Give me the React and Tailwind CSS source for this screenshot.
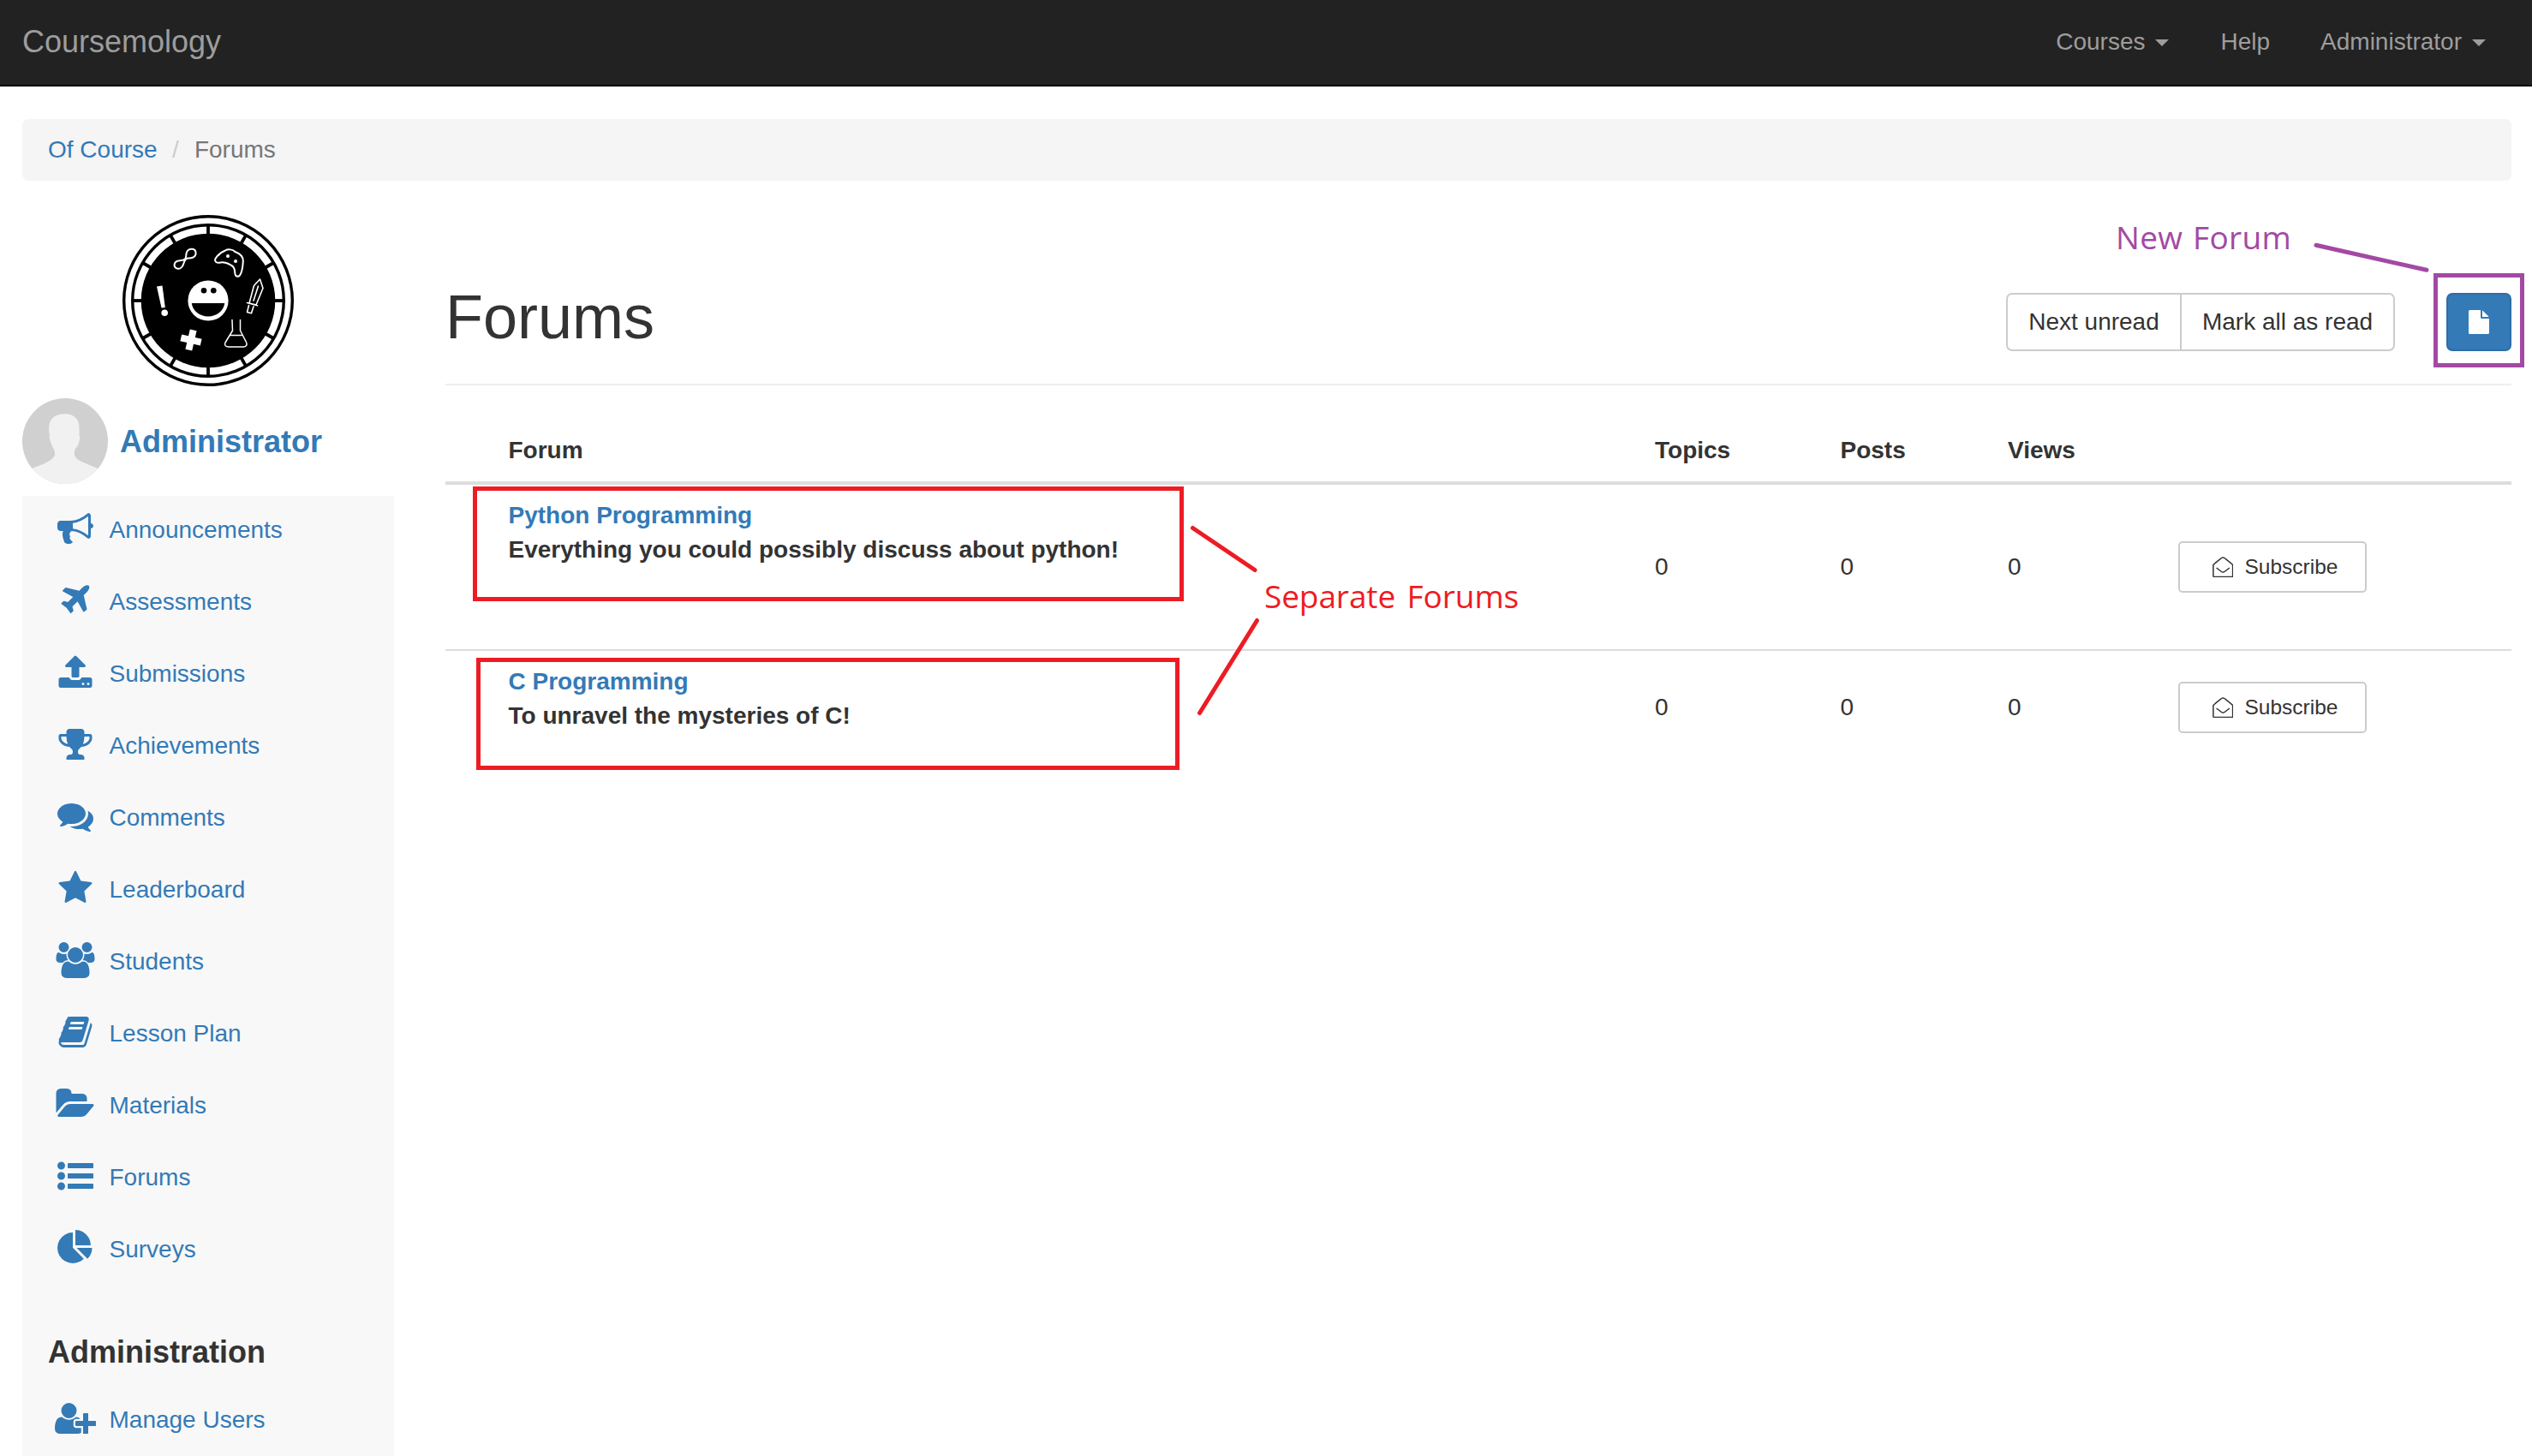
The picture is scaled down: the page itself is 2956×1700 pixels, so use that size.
const ICONS = {
  bullhorn: "M1664 640q53 0 90.5 37.5t37.5 90.5-37.5 90.5-90.5 37.5v384q0 52-38 90t-90 38q-417-347-812-380-58 19-91 66t-31 100.5 40 92.5q-20 33-23 65.5t6 58 33.5 55 48 50 61.5 50.5q-29 58-111.5 83t-168.5 11.5-132-55.5q-7-23-29.5-87.5t-32-94.5-23-89-15-101 3.5-98.5 22-110.5h-122q-66 0-113-47t-47-113v-192q0-66 47-113t113-47h480q435 0 896-384 52 0 90 38t38 90v384zm-128 604v-954q-394 302-768 343v270q377 42 768 341z",
  plane: "M1568 160q44 52 12 148t-108 172l-161 161 160 696q5 19-12 33l-128 96q-7 6-19 6-4 0-7-1-15-3-21-16l-279-508-259 259 53 194q5 17-8 31l-96 96q-9 9-23 9h-2q-15-2-24-13l-189-252-252-189q-11-7-13-23-1-13 9-25l96-97q9-9 23-9 6 0 8 1l194 53 259-259-508-279q-14-8-17-24-2-16 9-27l128-128q14-13 30-8l665 159 160-160q76-76 172-108t148 12z",
  upload: "M1344 1472q0-26-19-45t-45-19-45 19-19 45 19 45 45 19 45-19 19-45zm256 0q0-26-19-45t-45-19-45 19-19 45 19 45 45 19 45-19 19-45zm128-224v320q0 40-28 68t-68 28h-1472q-40 0-68-28t-28-68v-320q0-40 28-68t68-28h427q21 56 70.5 92t110.5 36h256q61 0 110.5-36t70.5-92h427q40 0 68 28t28 68zm-325-648q-17 40-59 40h-256v448q0 26-19 45t-45 19h-256q-26 0-45-19t-19-45v-448h-256q-42 0-59-40-17-39 14-69l448-448q18-19 45-19t45 19l448 448q31 30 14 69z",
  trophy: "M522 883q-74-162-74-371h-256v96q0 78 94.5 162t235.5 113zm1078-275v-96h-256q0 209-74 371 141-29 235.5-113t94.5-162zm128-128v128q0 71-41.5 143t-112 130-173 97.5-215.5 44.5q-42 54-95 95-38 34-52.5 72.5t-14.5 89.5q0 54 30.5 91t97.5 37q75 0 133.5 45.5t58.5 114.5v64q0 14-9 23t-23 9h-832q-14 0-23-9t-9-23v-64q0-69 58.5-114.5t133.5-45.5q67 0 97.5-37t30.5-91q0-51-14.5-89.5t-52.5-72.5q-53-41-95-95-113-5-215.5-44.5t-173-97.5-112-130-41.5-143v-128q0-40 28-68t68-28h288v-96q0-66 47-113t113-47h576q66 0 113 47t47 113v96h288q40 0 68 28t28 68z",
  comments: "M1408 768q0 139-94 257t-256.5 186.5-353.5 68.5q-86 0-176-16-124 88-278 128-36 9-86 16h-3q-11 0-20.5-8t-11.5-21q-1-3-1-6.5t.5-6.5 2-6l2.5-5t3.5-5.5 4-5 4.5-5 4-4.5q5-6 23-25t26-29.5 22.5-29 25-38.5 20.5-44q-124-72-195-177t-71-224q0-139 94-257t256.5-186.5 353.5-68.5 353.5 68.5 256.5 186.5 94 257zm384 256q0 120-71 224.5t-195 176.5q10 24 20.5 44t25 38.5 22.5 29 26 29.5 23 25q1 1 4 4.5t4.5 5 4 5 3.5 5.5l2.5 5t2 6 .5 6.5-1 6.5q-3 14-13 22t-22 7q-50-7-86-16-154-40-278-128-90 16-176 16-271 0-472-132 58 4 88 4 161 0 309-45t264-129q125-92 192-212t67-254q0-77-23-152 129 71 204 178t75 230z",
  star: "M1728 647q0 22-26 48l-363 354 86 500q1 7 1 20 0 21-10.5 35.5t-30.5 14.5q-19 0-40-12l-449-236-449 236q-22 12-40 12-21 0-31.5-14.5t-10.5-35.5q0-6 2-20l86-500-364-354q-25-27-25-48 0-37 56-46l502-73 225-455q19-41 49-41t49 41l225 455 502 73q56 9 56 46z",
  users: "M529 896q-162 5-265 128h-134q-82 0-138-40.5t-56-118.5q0-353 124-353 6 0 43.5 21t97.5 42.5 119 21.5q67 0 133-23-5 37-5 66 0 139 81 256zm1071 637q0 120-73 189.5t-194 69.5h-874q-121 0-194-69.5t-73-189.5q0-53 3.5-103.5t14-109 26.5-108.5 43-97.5 62-81 85.5-53.5 111.5-20q10 0 43 21.5t73 48 107 48 135 21.5 135-21.5 107-48 73-48 43-21.5q61 0 111.5 20t85.5 53.5 62 81 43 97.5 26.5 108.5 14 109 3.5 103.5zm-1024-1277q0 106-75 181t-181 75-181-75-75-181 75-181 181-75 181 75 75 181zm704 384q0 159-112.5 271.5t-271.5 112.5-271.5-112.5-112.5-271.5 112.5-271.5 271.5-112.5 271.5 112.5 112.5 271.5zm576 225q0 78-56 118.5t-138 40.5h-134q-103-123-265-128 81-117 81-256 0-29-5-66 66 23 133 23 59 0 119-21.5t97.5-42.5 43.5-21q124 0 124 353zm-128-609q0 106-75 181t-181 75-181-75-75-181 75-181 181-75 181 75 75 181z",
  book: "M1703 478q40 57 18 129l-275 906q-19 64-76.5 107.5t-122.5 43.5h-923q-77 0-148.5-53.5t-99.5-131.5q-24-67-2-127 0-4 3-27t4-37q1-8-3-21.5t-3-19.5q2-11 8-21t16.5-23.5 16.5-23.5q23-38 45-91.5t30-91.5q3-10 .5-30t-.5-28q3-11 17-28t17-23q21-36 42-92t25-90q1-9-2.5-32t.5-28q4-13 22-30.5t22-22.5q19-26 42.5-84.5t27.5-96.5q1-8-3-25.5t-2-26.5q2-8 9-18t18-23 17-21q8-12 16.5-30.5t15-35 16-36 19.5-32 26.5-23.5 36-11.5 47.5 5.5l-1 3q38-9 51-9h761q74 0 114 56t18 130l-274 906q-36 119-71.5 153.5t-128.5 34.5h-869q-27 0-38 15-11 16-1 43 24 70 144 70h923q29 0 56-15.5t35-41.5l300-987q7-22 5-57 38 15 59 43zm-1064 2q-4 13 2 22.5t20 9.5h608q13 0 25.5-9.5t16.5-22.5l21-64q4-13-2-22.5t-20-9.5h-608q-13 0-25.5 9.5t-16.5 22.5zm-83 256q-4 13 2 22.5t20 9.5h608q13 0 25.5-9.5t16.5-22.5l21-64q4-13-2-22.5t-20-9.5h-608q-13 0-25.5 9.5t-16.5 22.5z",
  folder: "M1815 952q0 31-31 66l-336 396q-43 51-120.5 86.5t-143.5 35.5h-1088q-34 0-60.5-13t-26.5-43q0-31 31-66l336-396q43-51 120.5-86.5t143.5-35.5h1088q34 0 60.5 13t26.5 43zm-343-344v160h-832q-94 0-197 47.5t-164 119.5l-337 396-5 6q0-4-.5-12.5t-.5-12.5v-960q0-92 66-158t158-66h320q92 0 158 66t66 158v32h544q92 0 158 66t66 158z",
  list: "M384 1408a192 192 0 1 1-384 0a192 192 0 1 1 384 0zM384 896a192 192 0 1 1-384 0a192 192 0 1 1 384 0zM384 384a192 192 0 1 1-384 0a192 192 0 1 1 384 0zM544 1280h1216q32 0 32 32v192q0 32-32 32h-1216q-32 0-32-32v-192q0-32 32-32zM544 768h1216q32 0 32 32v192q0 32-32 32h-1216q-32 0-32-32v-192q0-32 32-32zM544 256h1216q32 0 32 32v192q0 32-32 32h-1216q-32 0-32-32v-192q0-32 32-32z",
  pie: "M768 890l546 546q-106 108-247.5 168t-298.5 60q-209 0-385.5-103t-279.5-279.5-103-385.5 103-385.5 279.5-279.5 385.5-103v762zm187 6h773q0 157-60 298.5t-168 247.5zm709-128h-768v-768q209 0 385.5 103t279.5 279.5 103 385.5z",
  userPlus: "M704 896q-159 0-271.5-112.5t-112.5-271.5 112.5-271.5 271.5-112.5 271.5 112.5 112.5 271.5-112.5 271.5-271.5 112.5zm960 128h352q13 0 22.5 9.5t9.5 22.5v192q0 13-9.5 22.5t-22.5 9.5h-352v352q0 13-9.5 22.5t-22.5 9.5h-192q-13 0-22.5-9.5t-9.5-22.5v-352h-352q-13 0-22.5-9.5t-9.5-22.5v-192q0-13 9.5-22.5t22.5-9.5h352v-352q0-13 9.5-22.5t22.5-9.5h192q13 0 22.5 9.5t9.5 22.5v352zm-736 224q0 52 38 90t90 38h256v238q-68 50-171 50h-874q-121 0-194-69t-73-190q0-53 3.5-103.5t14-109 26.5-108.5 43-97.5 62-81 85.5-53.5 111.5-20q19 0 39 17 79 61 154.5 91.5t164.5 30.5 164.5-30.5 154.5-91.5q20-17 39-17 132 0 217 96h-223q-52 0-90 38t-38 90v192z",
};

const NAV = [
  ["bullhorn", "Announcements"],
  ["plane", "Assessments"],
  ["upload", "Submissions"],
  ["trophy", "Achievements"],
  ["comments", "Comments"],
  ["star", "Leaderboard"],
  ["users", "Students"],
  ["book", "Lesson Plan"],
  ["folder", "Materials"],
  ["list", "Forums"],
  ["pie", "Surveys"],
];

function NavItem({ icon, label }) {
  return (
    <a className="flex h-[84px] items-center pb-2 pl-[34px] text-[#337ab7]">
      <span className="flex w-[55px] justify-center">
        <svg
          viewBox={icon === "userPlus" ? "0 0 2048 1792" : "0 0 1792 1792"}
          className={icon === "userPlus" ? "h-[42px] w-[48px] overflow-visible" : "h-[42px] w-[42px] overflow-visible"}
          fill="currentColor"
        >
          <path d={ICONS[icon]} />
        </svg>
      </span>
      <span className="ml-[12.5px] pt-1 leading-10">{label}</span>
    </a>
  );
}

function Logo() {
  const ticks = Array.from({ length: 12 }, (_, i) => i * 30);
  return (
    <svg viewBox="0 0 200 200" className="size-[200px]">
      <circle cx="100" cy="100" r="98.3" fill="#fff" stroke="#000" strokeWidth="3.4" />
      <circle cx="100" cy="100" r="88.3" fill="#fff" stroke="#000" strokeWidth="3.4" />
      <circle cx="100" cy="100" r="78.3" fill="#000" />
      {ticks.map((t) => (
        <path key={t} d="M100 11v14" stroke="#000" strokeWidth="3.8" transform={`rotate(${t} 100 100)`} />
      ))}
      <circle cx="100" cy="100" r="23.6" fill="#fff" />
      <circle cx="95" cy="88.3" r="3.3" />
      <circle cx="106.3" cy="88.3" r="3.3" />
      <path d="M80.800 103h38.400a19.300 17.300 0 0 1-38.400 0z" />
      <g fill="none" stroke="#fff" strokeWidth="2" strokeLinejoin="round" strokeLinecap="round">
        <path d="M73 51.500C69 55 62.500 51 60.800 57C59.500 62 66 65 69.500 60.500C72.500 56 71 54.500 74 51.500C76 49.500 78 51.500 82.500 49.500C87 47 86.500 40.500 81.500 39.800C75.500 39 74.500 44 74.300 47C74.200 49.500 73.800 50.800 73 51.500z" />
        <path d="M108.500 51C111 47 116 43 120 41.500C123 39.500 129 40 131.500 43C137 45 141 48.500 140.800 54C140.500 60 139.500 67 137 70.500C134.500 73 131.500 71.500 131.300 68C131.300 63 130 60 126.500 58.500C123 56.500 119.500 54.500 114.500 55.500C110 56.500 107 54.500 108.500 51z" />
        <path strokeWidth="1.6" d="M160.500 75l-7 7.500-5.500 20.500 8 2 8-19.500zM158.500 83l-5.500 17M145.500 102.500l12 3.200M147.500 105.500l-2 8 5 1.300 2.500-8" />
        <path d="M128 122.500l.5 12.500-8.500 14c-1.500 3 .5 5 4 5h17c3.500 0 5-2.500 3.500-5.500l-7-13.500v-12.500M126 140.500h13" strokeWidth="1.5" />
      </g>
      <circle cx="123" cy="48" r="2" fill="#fff" />
      <circle cx="132" cy="54" r="2" fill="#fff" />
      <path d="M40 83.500l6.500-1 3.300 25.500-4.300.6z" fill="#fff" />
      <circle cx="49.2" cy="114.3" r="3.8" fill="#fff" />
      <path d="M76 134h8v8h8v8h-8v8h-8v-8h-8v-8h8z" fill="#fff" transform="rotate(13 80 146)" />
    </svg>
  );
}

function Avatar() {
  return (
    <svg viewBox="0 0 100 100" className="size-[100px] rounded-full">
      <rect width="100" height="100" fill="#d0d0d0" />
      <path
        d="M49 18.300C60 18 66.500 24 66.500 34V43.500C67.800 44 67.300 46 66.800 49C66 54 64 57 62 59C61 62 60.500 64 61 66C62 71 68 73.500 74 76L88 82V100H11V82L24 77C31 74 37 70 38 66C38.300 63 37.500 60 36 58C34 54 32.500 50 31.800 46C31.300 44.500 31.500 43.700 32 43.500C31 40 31 36 31.300 32C32.500 23 39 18.500 49 18.300z"
        fill="#f1f1f1"
      />
    </svg>
  );
}

function Caret() {
  return <span className="mt-0.5 border-x-8 border-t-8 border-x-transparent border-t-[#9d9d9d]" />;
}

function Subscribe() {
  return (
    <button className="flex h-[60px] w-[220px] items-center rounded-[5px] border-2 border-[#ccc] bg-white pl-[37.5px] text-[24.5px] leading-9">
      <svg viewBox="0 0 24.5 24.5" className="size-[24.5px]" fill="none" stroke="#333" strokeWidth="1.5" strokeLinejoin="round">
        <path d="M.9 9.500C4 6.500 8 3.500 10.500 1.500C11.800.600 12.700.600 14 1.500C16.500 3.500 20.500 6.500 23.600 9.500V22.300Q23.600 23.600 22.300 23.600H2.200Q.9 23.600 .9 22.300z" />
        <path d="M4.600 13L10.500 17.500Q12.250 18.800 14 17.500L19.900 13" />
      </svg>
      <span className="ml-[13.5px]">Subscribe</span>
    </button>
  );
}

const GRID = "grid grid-cols-[1338.5px_216.5px_195.5px_199px_1fr] pl-[73.5px]";

function ForumRow({ title, description, className }) {
  return (
    <div className={`${GRID} items-center ${className}`}>
      <div className="self-start pt-4 font-bold leading-10">
        <a className="block text-[#337ab7]">{title}</a>
        <p>{description}</p>
      </div>
      <span className="leading-10">0</span>
      <span className="leading-10">0</span>
      <span className="leading-10">0</span>
      <Subscribe />
    </div>
  );
}

export default function App() {
  return (
    <div className="relative h-[1700px] w-[2956px] overflow-hidden bg-white font-['Liberation_Sans',Arial,sans-serif] text-[28px] text-[#333]">
      <header className="flex h-[101px] items-center border-b-2 border-[#080808] bg-[#222] pl-[26px] pr-[54px] text-[#9d9d9d]">
        <span className="pb-0.5 text-[36px] leading-none">Coursemology</span>
        <nav className="ml-auto flex items-center pb-0.5 leading-10">
          <a className="flex items-center gap-3">Courses <Caret /></a>
          <a className="ml-[60px]">Help</a>
          <a className="ml-[59px] flex items-center gap-3">Administrator <Caret /></a>
        </nav>
      </header>

      <div className="ml-[26px] mr-6 mt-[38px] flex h-[72px] items-center rounded-[7px] bg-[#f5f5f5] pl-[30px] leading-10">
        <a className="text-[#337ab7]">Of Course</a>
        <span className="ml-[17.5px] text-[#ccc]">/</span>
        <span className="ml-[18px] text-[#777]">Forums</span>
      </div>

      <div className="ml-[26px] mr-6 flex">
        <aside className="w-[434px] shrink-0 pt-10">
          <div className="flex justify-center"><Logo /></div>
          <div className="mt-3.5 flex items-center">
            <Avatar />
            <span className="ml-3.5 pt-0.5 text-[36px] font-bold text-[#337ab7]">Administrator</span>
          </div>
          <div className="mt-3.5 h-[1121px] bg-[#f8f8f8]">
            {NAV.map(([icon, label]) => <NavItem key={label} icon={icon} label={label} />)}
            <h3 className="mb-[21px] flex h-[94px] items-end pl-[30px] text-[36px] font-bold leading-none">Administration</h3>
            <NavItem icon="userPlus" label="Manage Users" />
          </div>
        </aside>

        <main className="ml-[60px] flex-1">
          <div className="flex h-[239px] items-start border-b-2 border-[#eee] pt-[119px]">
            <h1 className="text-[72px] leading-[80px]">Forums</h1>
            <div className="ml-auto mt-3 flex h-[68px] rounded-[7px] border-2 border-[#ccc] leading-[64px]">
              <button className="w-[203px] border-r-2 border-[#ccc]">Next unread</button>
              <button className="w-[247px]">Mark all as read</button>
            </div>
            <button className="ml-[60px] mt-3 flex h-[68px] w-[76px] items-center justify-center rounded-[7px] border-2 border-[#2e6da4] bg-[#337ab7]">
              <svg viewBox="0 0 24 28" className="h-7 w-6" fill="#fff">
                <path d="M0 1.500Q0 0 1.500 0H14V8.500Q14 10 15.500 10H24V26.500Q24 28 22.500 28H1.500Q0 28 0 26.500zM16 .4Q16.500.7 17 1.200L22.800 7Q23.200 7.500 23.600 8H16z" />
              </svg>
            </button>
          </div>

          <div className={`${GRID} h-[116px] border-b-4 border-[#ddd] pt-[56px] font-bold leading-10`}>
            <span>Forum</span><span>Topics</span><span>Posts</span><span>Views</span>
          </div>
          <ForumRow
            title="Python Programming"
            description="Everything you could possibly discuss about python!"
            className="h-[194px] border-b-2 border-[#ddd]"
          />
          <ForumRow
            title="C Programming"
            description="To unravel the mysteries of C!"
            className="h-[132px]"
          />
        </main>
      </div>

      {/* Annotation overlay */}
      <div className="absolute left-[552px] top-[568px] h-[134px] w-[830px] border-[5px] border-[#ed1c24]" />
      <div className="absolute left-[556px] top-[768px] h-[131px] w-[821px] border-[5px] border-[#ed1c24]" />
      <div className="absolute left-[2841px] top-[319px] h-[110px] w-[106px] border-[5px] border-[#a349a4]" />
      <svg viewBox="0 0 2956 1700" className="pointer-events-none absolute inset-0 h-[1700px] w-[2956px]" strokeWidth="5" strokeLinecap="round">
        <path d="M2704 286.300L2833 315.300" stroke="#a349a4" />
        <path d="M1392.500 616.500L1465 665.500M1467.500 724.500L1400.500 832.500" stroke="#ed1c24" />
      </svg>
      <span className="absolute left-[2470px] top-[251px] whitespace-nowrap font-['Open_Sans','Noto_Sans',sans-serif] text-[37px] leading-[52px] tracking-[0.3px] [word-spacing:2px] text-[#a349a4]">New Forum</span>
      <span className="absolute left-[1476px] top-[670px] whitespace-nowrap font-['Open_Sans','Noto_Sans',sans-serif] text-[37px] leading-[52px] tracking-[-0.1px] [word-spacing:4px] text-[#ed1c24]">Separate Forums</span>
    </div>
  );
}
